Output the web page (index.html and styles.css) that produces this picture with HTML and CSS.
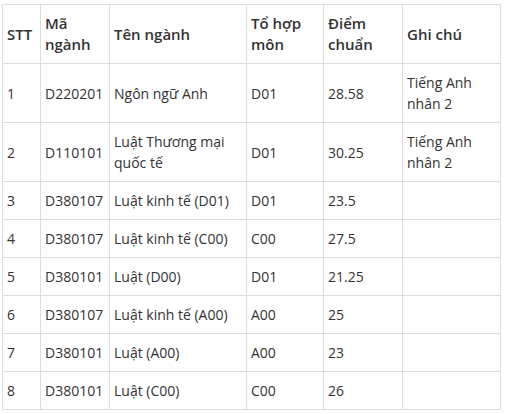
FILE: index.html
```html
<!DOCTYPE html>
<html lang="vi">
<head>
<meta charset="utf-8">
<link rel="stylesheet" href="styles.css">
</head>
<body>
<table class="scores">
  <colgroup>
    <col class="c-stt"><col class="c-ma"><col class="c-ten"><col class="c-to"><col class="c-diem"><col class="c-ghi">
  </colgroup>
  <thead>
    <tr><th>STT</th><th>Mã ngành</th><th>Tên ngành</th><th>Tổ hợp môn</th><th>Điểm chuẩn</th><th>Ghi chú</th></tr>
  </thead>
  <tbody>
    <tr><td>1</td><td>D220201</td><td>Ngôn ngữ Anh</td><td>D01</td><td>28.58</td><td>Tiếng Anh nhân 2</td></tr>
    <tr><td>2</td><td>D110101</td><td>Luật Thương mại quốc tế</td><td>D01</td><td>30.25</td><td>Tiếng Anh nhân 2</td></tr>
    <tr><td>3</td><td>D380107</td><td>Luật kinh tế (D01)</td><td>D01</td><td>23.5</td><td></td></tr>
    <tr><td>4</td><td>D380107</td><td>Luật kinh tế (C00)</td><td>C00</td><td>27.5</td><td></td></tr>
    <tr><td>5</td><td>D380101</td><td>Luật (D00)</td><td>D01</td><td>21.25</td><td></td></tr>
    <tr><td>6</td><td>D380107</td><td>Luật kinh tế (A00)</td><td>A00</td><td>25</td><td></td></tr>
    <tr><td>7</td><td>D380101</td><td>Luật (A00)</td><td>A00</td><td>23</td><td></td></tr>
    <tr><td>8</td><td>D380101</td><td>Luật (C00)</td><td>C00</td><td>26</td><td></td></tr>
  </tbody>
</table>
</body>
</html>
```
FILE: styles.css
```css
html, body {
  margin: 0;
  background: #fff;
}
body {
  padding: 4px 0 0 2px;
  font-family: "Open Sans", "Liberation Sans", sans-serif;
  color: #333;
}
.scores {
  border-collapse: collapse;
  table-layout: fixed;
  width: 499px;
  font-size: 14px;
  line-height: 21px;
}
.c-stt { width: 38px; }
.c-ma { width: 69px; }
.c-ten { width: 137px; }
.c-to { width: 77px; }
.c-diem { width: 79px; }
.c-ghi { width: 98px; }
.scores th, .scores td {
  border: 1px solid #ddd;
  padding: 8px 4px 8px 4px;
  text-align: left;
  vertical-align: middle;
}
.scores th {
  font-weight: 600;
  font-size: 15px;
}
.scores td {
  height: 21px;
}
```
